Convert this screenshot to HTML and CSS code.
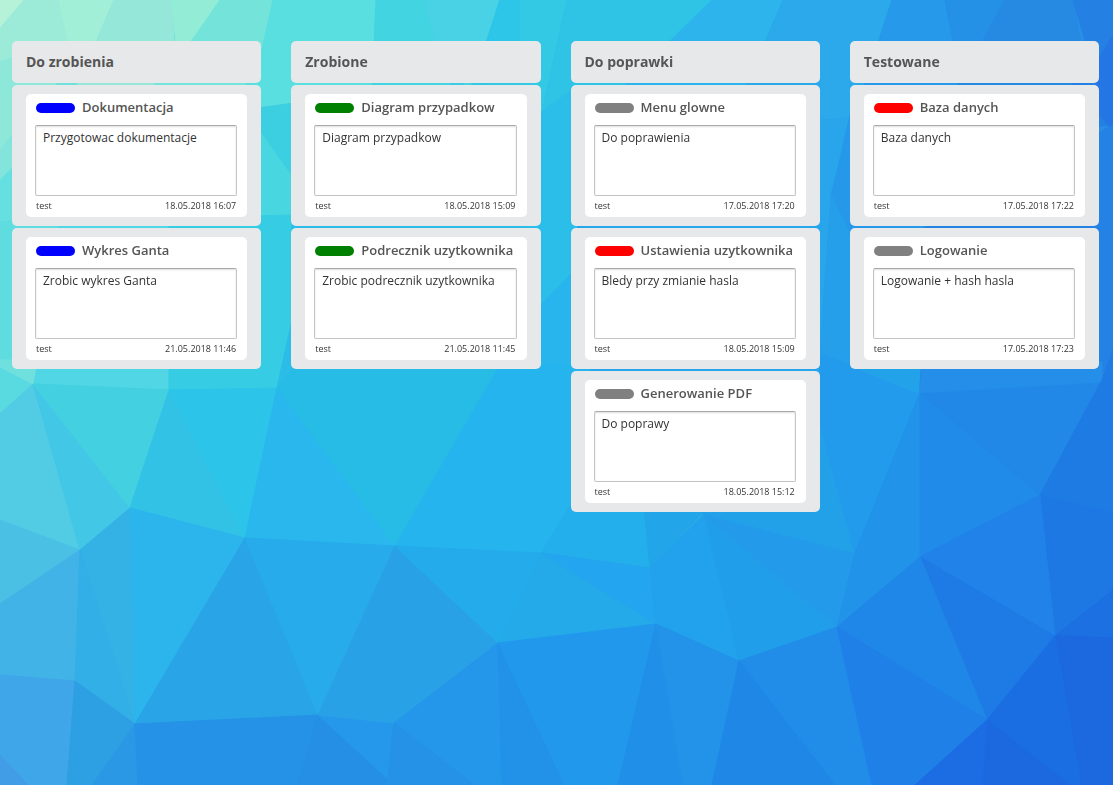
FILE: index.html
```html
<!DOCTYPE html>
<html lang="pl">
<head>
<meta charset="utf-8">
<meta name="viewport" content="width=device-width, initial-scale=1">
<title>Tablica zadan</title>
<link rel="stylesheet" href="styles.css">
</head>
<body>
<svg class="backdrop" viewBox="0 0 1113 785" preserveAspectRatio="xMidYMid slice" aria-hidden="true">
  <!-- upper facets -->
  <polygon color="#9cebd8" points="0,0 59,0 75,80 0,90"/>
  <polygon color="#b5f2d8" points="0,0 23,0 0,27"/>
  <polygon color="#a2efd7" points="59,0 114,0 80,80 68,41"/>
  <polygon color="#94e7d9" points="114,0 171,0 178,90 75,90"/>
  <polygon color="#93ecd6" points="171,0 220,0 178,60"/>
  <polygon color="#74e4da" points="220,0 273,0 255,90 150,90 190,43"/>
  <polygon color="#8ee8d9" points="0,62 30,50 60,90 60,150 0,165"/>
  <polygon color="#82e4da" points="0,150 12,135 150,85 150,230 0,230"/>
  <polygon color="#66dfe0" points="0,180 20,160 130,200 130,240 0,230"/>
  <polygon color="#5fdcdf" points="0,222 180,200 180,390 33,384 0,365"/>
  <polygon color="#5adfe0" points="273,0 376,0 372,95 330,104 150,130 255,80"/>
  <polygon color="#3ccfe1" points="200,116 330,98 400,250 261,250"/>
  <polygon color="#48d6e0" points="190,110 200,116 261,133 320,216 190,222"/>
  <polygon color="#42d4e0" points="376,0 425,0 450,60 450,150 372,90"/>
  <polygon color="#49d2e5" points="425,0 500,0 470,90 440,60"/>
  <polygon color="#33c9e5" points="500,0 567,0 540,125 470,150 470,90"/>
  <polygon color="#2dc5e8" points="500,0 519,0 519,41 480,85 487,41"/>
  <polygon color="#2fc3e6" points="567,0 712,0 570,135 530,165"/>
  <polygon color="#2eb4ec" points="712,0 783,0 740,100 640,200 580,130"/>
  <polygon color="#2ba9ea" points="783,0 892,0 850,120 740,200 740,100"/>
  <polygon color="#2699ea" points="892,0 945,0 960,90 850,235 820,220"/>
  <polygon color="#2490e6" points="945,0 1005,0 960,90 953,41"/>
  <polygon color="#268ae3" points="1005,0 1073,0 1090,90 950,100"/>
  <polygon color="#2580e3" points="1073,0 1113,0 1113,125 1060,130 1085,41"/>
  <polygon color="#2576e5" points="1113,35 1095,65 1099,115 1113,130"/>
  <!-- facets behind the cards -->
  <polygon color="#50d6e4" points="60,218 170,218 169,390 33,384"/>
  <polygon color="#36cde4" points="169,218 292,215 292,320 277,388 169,390"/>
  <polygon color="#2bbce8" points="292,215 300,215 480,150 580,130 571,272 500,390 395,546 277,388 292,320"/>
  <polygon color="#28b5ee" points="580,265 540,305 500,380 395,546 541,553 580,500 720,380"/>
  <polygon color="#28a5eb" points="571,125 660,130 850,118 830,195 850,360 704,514 570,520 580,265"/>
  <polygon color="#2bbee9" points="530,120 572,90 572,272 530,315"/>
  <polygon color="#2598ea" points="851,110 831,200 850,235 950,235 950,100"/>
  <polygon color="#259fe9" points="831,195 851,236 950,240 920,393 820,353"/>
  <polygon color="#2482e4" points="920,230 1113,125 1113,400 1102,380 920,393"/>
  <!-- lower left -->
  <polygon color="#58dae0" points="0,365 33,384 0,414"/>
  <polygon color="#70e0de" points="0,360 37,360 33,384 0,367"/>
  <polygon color="#52cce4" points="33,384 80,550 0,520 0,414"/>
  <polygon color="#42c7e7" points="33,384 130,508 80,550"/>
  <polygon color="#43d0e1" points="33,384 169,390 130,508"/>
  <polygon color="#31c2e6" points="169,390 245,538 130,508"/>
  <polygon color="#2dc4e9" points="169,390 277,388 245,538"/>
  <polygon color="#2ab7ee" points="277,388 395,546 245,538"/>
  <polygon color="#27bce6" points="277,388 300,360 510,345 395,546"/>
  <polygon color="#4ac0e5" points="0,520 80,550 0,604"/>
  <polygon color="#41b3e7" points="80,550 75,681 0,675 0,604"/>
  <polygon color="#34b2e6" points="130,508 135,724 80,550"/>
  <polygon color="#32afe7" points="80,550 135,724 75,681"/>
  <polygon color="#2cb5ec" points="130,508 245,538 135,724"/>
  <polygon color="#29a4e7" points="245,538 318,715 135,724"/>
  <polygon color="#27abeb" points="245,538 395,546 318,715"/>
  <polygon color="#3fa6e9" points="0,675 75,681 67,785 0,785"/>
  <polygon color="#429de7" points="0,755 28,785 0,785"/>
  <polygon color="#2da0e4" points="75,681 135,724 92,785 67,785"/>
  <polygon color="#2b98e5" points="135,724 138,785 92,785"/>
  <polygon color="#2592e7" points="135,724 318,715 298,785 138,785"/>
  <polygon color="#258fe5" points="318,715 387,778 387,785 298,785"/>
  <polygon color="#2598eb" points="318,715 394,723 387,778"/>
  <polygon color="#29a1e7" points="395,546 498,643 394,723 318,715"/>
  <!-- lower centre -->
  <polygon color="#26b4ee" points="500,365 590,365 590,485 541,553 395,546"/>
  <polygon color="#24abeb" points="395,546 541,553 498,643"/>
  <polygon color="#24aae9" points="541,553 656,624 498,643"/>
  <polygon color="#23aeec" points="571,505 645,505 650,568 541,553"/>
  <polygon color="#22a6e9" points="644,505 710,505 650,568"/>
  <polygon color="#24a5ef" points="541,553 650,568 656,624"/>
  <polygon color="#22a1ec" points="704,514 739,661 656,624 650,568"/>
  <polygon color="#2398eb" points="704,514 780,533 837,627"/>
  <polygon color="#219eea" points="704,514 837,627 739,661"/>
  <polygon color="#239bea" points="704,514 855,553 837,627 780,580"/>
  <polygon color="#22a1e9" points="700,505 820,430 855,553 704,514"/>
  <polygon color="#2497eb" points="498,643 502,785 387,785 394,723"/>
  <polygon color="#2592e7" points="394,723 475,785 387,785"/>
  <polygon color="#2292e8" points="498,643 565,785 502,785"/>
  <polygon color="#2298ed" points="498,643 656,624 618,785 565,785"/>
  <polygon color="#208fe7" points="656,624 683,785 618,785"/>
  <polygon color="#2293e9" points="656,624 739,661 712,785 683,785"/>
  <polygon color="#218de9" points="739,661 837,627 872,785 835,785"/>
  <polygon color="#1f88e7" points="739,661 835,785 712,785"/>
  <!-- lower right -->
  <polygon color="#239bec" points="820,353 920,393 855,553 820,425"/>
  <polygon color="#22a3e9" points="850,360 921,360 918,393 860,370"/>
  <polygon color="#2193e8" points="920,393 920,557 837,627 855,553"/>
  <polygon color="#218be9" points="920,393 1040,495 920,557"/>
  <polygon color="#2188e7" points="920,393 1102,380 1040,495"/>
  <polygon color="#248ee9" points="922,362 1102,362 1102,382 920,393"/>
  <polygon color="#1f7be4" points="1102,380 1113,350 1113,513 1040,495"/>
  <polygon color="#1e78e4" points="1040,495 1113,513 1113,590 1055,636"/>
  <polygon color="#2182e9" points="1040,495 1055,636 920,557"/>
  <polygon color="#1e7be6" points="920,557 1055,636 987,720"/>
  <polygon color="#1f87e7" points="920,557 987,720 837,627"/>
  <polygon color="#1f80e8" points="837,627 987,720 915,785 872,785"/>
  <polygon color="#1c70e1" points="1055,636 1113,590 1113,638"/>
  <polygon color="#1c68df" points="1055,636 1113,638 1113,785 1081,785"/>
  <polygon color="#1b6ee2" points="1055,636 1081,785 1070,785 987,720"/>
  <polygon color="#1c69df" points="987,720 1070,785 980,785"/>
  <polygon color="#1c6de3" points="987,720 982,785 915,785"/>
</svg>

<main class="board">
  <section class="column">
    <h2 class="column-title">Do zrobienia</h2>
    <article class="slot"><div class="card">
      <h3 class="card-title"><span class="tag blue"></span>Dokumentacja</h3>
      <textarea class="note" aria-label="Dokumentacja">Przygotowac dokumentacje</textarea>
      <footer class="meta"><span>test</span><time>18.05.2018 16:07</time></footer>
    </div></article>
    <article class="slot"><div class="card">
      <h3 class="card-title"><span class="tag blue"></span>Wykres Ganta</h3>
      <textarea class="note" aria-label="Wykres Ganta">Zrobic wykres Ganta</textarea>
      <footer class="meta"><span>test</span><time>21.05.2018 11:46</time></footer>
    </div></article>
  </section>
  <section class="column">
    <h2 class="column-title">Zrobione</h2>
    <article class="slot"><div class="card">
      <h3 class="card-title"><span class="tag green"></span>Diagram przypadkow</h3>
      <textarea class="note" aria-label="Diagram przypadkow">Diagram przypadkow</textarea>
      <footer class="meta"><span>test</span><time>18.05.2018 15:09</time></footer>
    </div></article>
    <article class="slot"><div class="card">
      <h3 class="card-title"><span class="tag green"></span>Podrecznik uzytkownika</h3>
      <textarea class="note" aria-label="Podrecznik uzytkownika">Zrobic podrecznik uzytkownika</textarea>
      <footer class="meta"><span>test</span><time>21.05.2018 11:45</time></footer>
    </div></article>
  </section>
  <section class="column">
    <h2 class="column-title">Do poprawki</h2>
    <article class="slot"><div class="card">
      <h3 class="card-title"><span class="tag gray"></span>Menu glowne</h3>
      <textarea class="note" aria-label="Menu glowne">Do poprawienia</textarea>
      <footer class="meta"><span>test</span><time>17.05.2018 17:20</time></footer>
    </div></article>
    <article class="slot"><div class="card">
      <h3 class="card-title"><span class="tag red"></span>Ustawienia uzytkownika</h3>
      <textarea class="note" aria-label="Ustawienia uzytkownika">Bledy przy zmianie hasla</textarea>
      <footer class="meta"><span>test</span><time>18.05.2018 15:09</time></footer>
    </div></article>
    <article class="slot"><div class="card">
      <h3 class="card-title"><span class="tag gray"></span>Generowanie PDF</h3>
      <textarea class="note" aria-label="Generowanie PDF">Do poprawy</textarea>
      <footer class="meta"><span>test</span><time>18.05.2018 15:12</time></footer>
    </div></article>
  </section>
  <section class="column">
    <h2 class="column-title">Testowane</h2>
    <article class="slot"><div class="card">
      <h3 class="card-title"><span class="tag red"></span>Baza danych</h3>
      <textarea class="note" aria-label="Baza danych">Baza danych</textarea>
      <footer class="meta"><span>test</span><time>17.05.2018 17:22</time></footer>
    </div></article>
    <article class="slot"><div class="card">
      <h3 class="card-title"><span class="tag gray"></span>Logowanie</h3>
      <textarea class="note" aria-label="Logowanie">Logowanie + hash hasla</textarea>
      <footer class="meta"><span>test</span><time>17.05.2018 17:23</time></footer>
    </div></article>
  </section>
</main>
</body>
</html>
```
FILE: styles.css
```css
* { box-sizing: border-box; }

body {
  margin: 0;
  background: #fff;
  font-family: "Open Sans", "Noto Sans", sans-serif;
  color: #333;
}

.backdrop {
  position: fixed;
  top: 0;
  left: 0;
  z-index: -1;
  width: 100%;
  height: calc(100vh - 1px);
  background: linear-gradient(100deg, #7ae4da, #34c6e6 45%, #2580e4);
}

.backdrop polygon {
  fill: currentColor;
  stroke: currentColor;
  stroke-width: 1;
}

.board {
  display: grid;
  grid-template-columns: repeat(4, minmax(0, 1fr));
  gap: 30px;
  align-items: start;
  padding: 41px 14px 41px 12px;
}

.column {
  display: flex;
  flex-direction: column;
  gap: 2px;
}

.column-title {
  margin: 0;
  padding: 11px 14px;
  border-radius: 5px;
  background: #e6e8ea;
  color: #555;
  font-size: 14px;
  font-weight: 700;
  line-height: 20px;
}

.slot {
  padding: 9px 14px;
  border-radius: 5px;
  background: #e6e8ea;
}

.card {
  display: flex;
  flex-direction: column;
  padding: 4px 10px 4px 9px;
  border-radius: 5px;
  background: #fff;
}

.card-title {
  display: flex;
  align-items: center;
  gap: 7px;
  margin: 0 0 8px;
  padding-left: 1px;
  color: #555;
  font-size: 13px;
  font-weight: 600;
  line-height: 19px;
  white-space: nowrap;
}

.tag {
  width: 39px;
  height: 10px;
  border-radius: 5px;
}

.blue { background: #00f; }
.green { background: #008000; }
.gray { background: #808080; }
.red { background: #f00; }

.note {
  display: block;
  width: 100%;
  height: 71px;
  margin: 0;
  padding: 3px 7px;
  border: 1px solid #c4c4c4;
  border-top-color: #aaa;
  border-radius: 2px;
  background: #fff;
  box-shadow: inset 0 1px 2px #ddd;
  color: #333;
  font: 12px/18px "Open Sans", "Noto Sans", sans-serif;
  resize: none;
}

.meta {
  display: flex;
  justify-content: space-between;
  padding: 2px 1px 0;
  font-size: 9px;
  line-height: 15px;
}
```
